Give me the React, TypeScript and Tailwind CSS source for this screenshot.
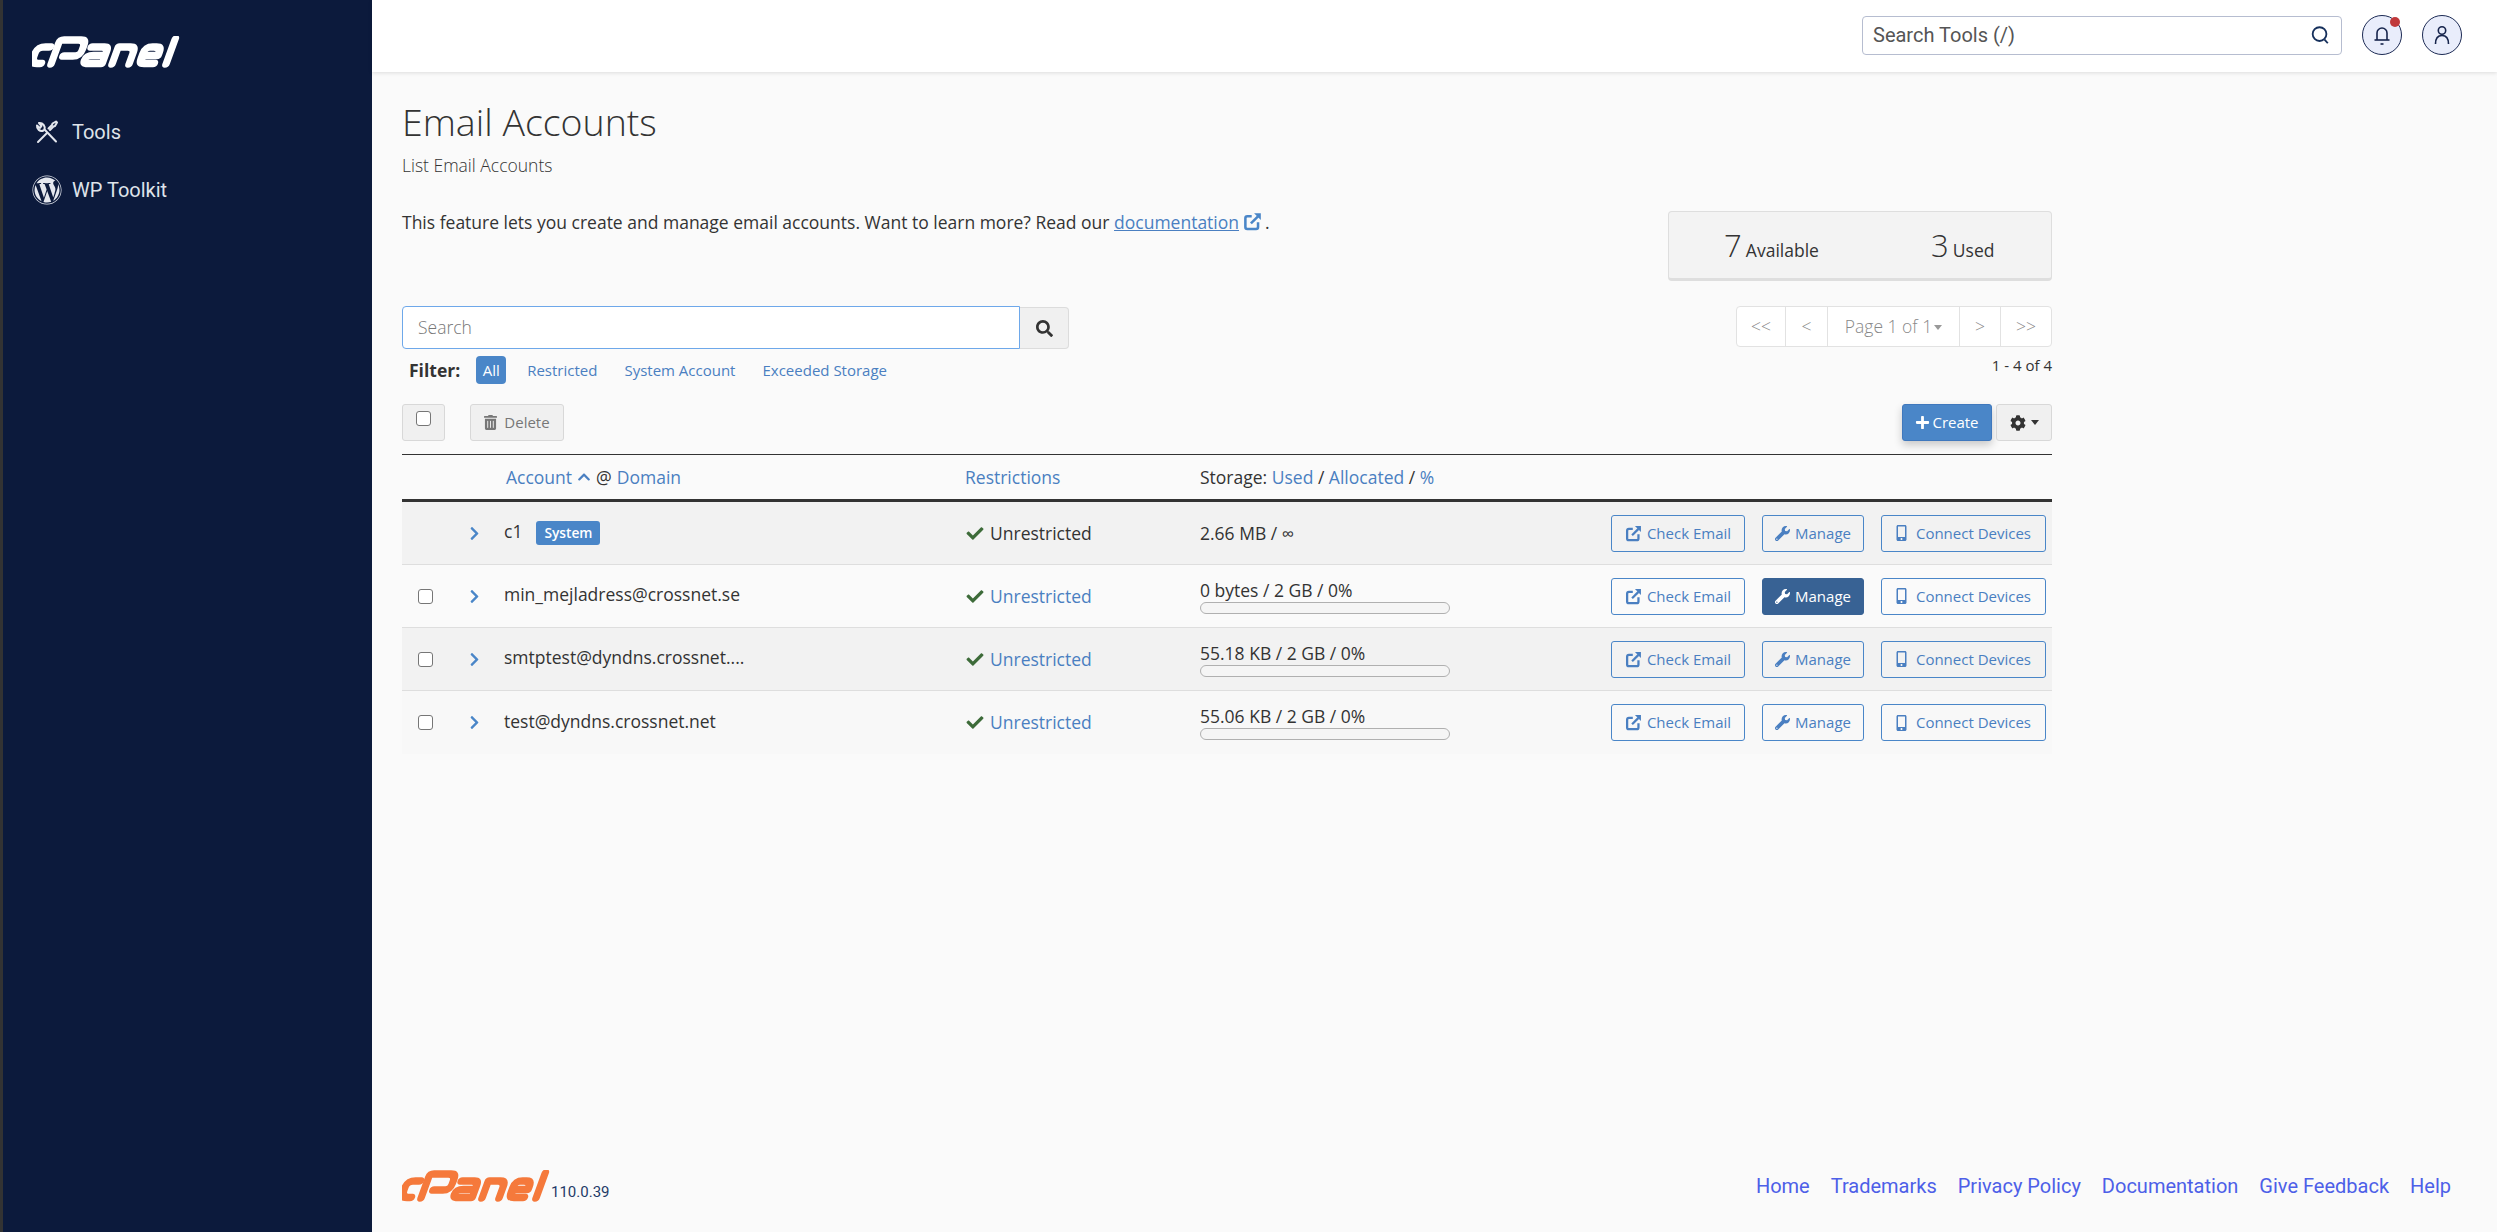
import { FaCheck, FaChevronRight, FaChevronUp, FaCog, FaMobileAlt, FaPlus, FaSearch, FaTrashAlt, FaWordpress, FaWrench } from 'react-icons/fa';

const Logo = ({ color, className }: { color: string; className: string }) => (
    <svg viewBox="0 0 148 32" className={className} aria-label="cPanel" fill="none" stroke={color} strokeWidth="7.500" strokeLinejoin="round" strokeLinecap="round">
        <g transform="translate(-6 0) skewX(-20)" style={{ transformOrigin: '0 31px' }}>
            <path d="M17 11 H11 Q4 11 4 18 V21 Q4 27.500 11 27.500 H14" />
            <path d="M24 28 V6.500 Q24 4 27 4 H44 Q50 4 50 10 V14 Q50 20 44 20 H33" />
            <path d="M58 11 H70 Q75 11 75 16 V27.500 H62 Q56 27.500 56 23.500 Q56 19.500 62 19.500 H73" />
            <path d="M85 28 V11 H96 Q102 11 102 17 V28" />
            <path d="M114 19.500 H128 V17 Q128 11 122 11 H118 Q112 11 112 17 V22 Q112 27.500 118 27.500 H127" />
            <path d="M139 28 V3" />
        </g>
    </svg>
);

const ToolsIcon = () => (
    <svg viewBox="0 0 24 24" className="h-[24px] w-[24px]" fill="none" stroke="#e4e7ee" strokeWidth="2" strokeLinecap="round" strokeLinejoin="round">
        <path d="M3 22 L12 13" />
        <path d="M15 10 L18.500 6.500 L20 6 L22 2.500 L21 1.500 L17.500 3.500 L17 5 L13.500 8.500" />
        <path d="M21 21.500 L9.500 9.500" />
        <path d="M9.500 9.500 C10.500 6.500 8 2.500 4 3 L6.500 6 L5 8 L2 5.500 C1.500 9 5 12 8.500 10.500" />
    </svg>
);

const ExternalLink = ({ className }: { className: string }) => (
    <svg viewBox="0 0 24 24" className={className} fill="none" stroke="currentColor" strokeWidth="3.200">
        <path d="M11 5.500 H5.500 Q3 5.500 3 8 V19 Q3 21.500 5.500 21.500 H16.500 Q19 21.500 19 19 V13" />
        <path d="M10 14.500 L19 5.500" />
        <path d="M14 1.500 H22.500 V10 Z" fill="currentColor" stroke="none" />
    </svg>
);

const Bell = () => (
    <svg viewBox="0 0 24 24" className="h-[24px] w-[24px]" fill="none" stroke="#16244c" strokeWidth="1.600">
        <path d="M7 17 V10 a5 5 0 0 1 10 0 V17" />
        <path d="M4.500 17 H19.500" />
        <path d="M10.500 21 H13.500" />
    </svg>
);

const User = () => (
    <svg viewBox="0 0 24 24" className="h-[24px] w-[24px]" fill="none" stroke="#16244c" strokeWidth="1.600">
        <circle cx="12" cy="7.500" r="3.700" />
        <path d="M5.500 21 C5.500 15 8.500 12.500 12 12.500 C15.500 12.500 18.500 15 18.500 21" />
    </svg>
);

const SearchTools = () => (
    <svg viewBox="0 0 24 24" className="h-[22px] w-[22px]" fill="none" stroke="#16305c" strokeWidth="2">
        <circle cx="11.500" cy="11" r="7.500" />
        <path d="M17 17 L20.500 21" />
    </svg>
);

const Row = ({ name, storage, odd, system, last, hot }: { name: string; storage: string; odd?: boolean; system?: boolean; last?: boolean; hot?: boolean }) => (
    <div className={`grid h-[63px] grid-cols-[102px_461px_235px_1fr] items-center ${odd ? 'bg-[#f2f2f2]' : last ? 'bg-[#f8f8f8]' : 'bg-[#fafafa]'} ${last ? '' : 'border-b-[1.5px] border-[#dedede]'}`}>
        <div className="flex items-center">
            <div className="flex w-[47px] justify-center">
                {!system && <input type="checkbox" className="h-[15px] w-[15px] appearance-none rounded-[3px] border-[1.5px] border-[#767676] bg-white" />}
            </div>
            <FaChevronRight className="ml-[20px] h-[15px] w-[11px] text-[#4a86c8]" />
        </div>
        <div className="flex items-center gap-[14px] pb-[3px] text-[17.5px] text-[#333]">
            {name}
            {system && <span className="mt-[3px] rounded-[3px] bg-[#4a86c8] px-[8px] py-[3px] text-[13.75px] leading-[18px] font-semibold text-white">System</span>}
        </div>
        <div className="flex items-center gap-[6px] pl-[1px] text-[17.5px]">
            <FaCheck className="h-[17px] w-[18px] text-[#3d6b39]" />
            <span className={system ? 'text-[#333]' : 'text-[#4a7fc1]'}>Unrestricted</span>
        </div>
        <div className="flex items-center justify-between pr-[6px]">
            <div className="w-[250px] text-[#333]">
                <div className="text-[17.5px] leading-[23px]">{storage}</div>
                {!system && <div className="h-[12px] rounded-full border-[1.5px] border-[#b0b0b0] bg-[#f5f5f5]" />}
            </div>
            <div className="flex gap-[17px] text-[15px] text-[#4a7fc1]">
                <a className="flex h-[37px] w-[134px] items-center justify-center gap-[5px] rounded-[3px] border-[1.5px] border-[#4a86c8]"><ExternalLink className="h-[17px] w-[17px]" />Check Email</a>
                <a className={`flex h-[37px] w-[102px] items-center justify-center gap-[5px] rounded-[3px] border-[1.5px] ${hot ? 'border-[#386294] bg-[#386294] text-white' : 'border-[#4a86c8]'}`}><FaWrench className="h-[15px] w-[15px]" />Manage</a>
                <a className="flex h-[37px] w-[165px] items-center justify-center gap-[9px] rounded-[3px] border-[1.5px] border-[#4a86c8]"><FaMobileAlt className="h-[16px] w-[11px]" />Connect Devices</a>
            </div>
        </div>
    </div>
);

export default function App() {
    return (
        <div className="flex h-[1232px] w-[2497px] overflow-hidden bg-[#fafafa] font-['Open_Sans',sans-serif]">
            <aside className="w-[372px] shrink-0 border-l-[3px] border-[#333] bg-[#0c1a3c] font-['Roboto',sans-serif] text-[20px] text-[#dfe3ea]">
                <div className="pt-[36px] pl-[29px]">
                    <Logo color="#fff" className="h-[32px] w-[148px]" />
                </div>
                <div className="mt-[49px] flex h-[30px] items-center pl-[32px]">
                    <ToolsIcon />
                    <span className="ml-[13px]">Tools</span>
                </div>
                <div className="mt-[28px] flex h-[30px] items-center pl-[29px]">
                    <FaWordpress className="h-[30px] w-[30px] text-[#e4e7ee]" />
                    <span className="ml-[10px]">WP Toolkit</span>
                </div>
            </aside>
            <div className="flex min-w-0 flex-1 flex-col">
                <header className="flex h-[72px] shrink-0 items-center justify-end gap-[20px] bg-white pr-[35px] pb-[2px] shadow-[0_1px_4px_rgba(0,0,0,0.12)]">
                    <div className="flex h-[39px] w-[480px] items-center justify-between rounded-[4px] border-[1.5px] border-[#b6bdd0] pr-[10px] pl-[10px] font-['Roboto',sans-serif] text-[20px] text-[#555]">
                        Search Tools (/)
                        <SearchTools />
                    </div>
                    <div className="relative flex h-[40px] w-[40px] items-center justify-center rounded-full border-[1.5px] border-[#1c2a54] bg-[#e9edfb]">
                        <Bell />
                        <span className="absolute top-[1px] right-[1px] h-[10px] w-[10px] rounded-full bg-[#c0393b]" />
                    </div>
                    <div className="flex h-[40px] w-[40px] items-center justify-center rounded-full border-[1.5px] border-[#1c2a54] bg-[#e9edfb]">
                        <User />
                    </div>
                </header>
                <main className="w-[1680px] flex-1 pl-[30px]">
                    <h1 className="mt-[28px] text-[37.5px] leading-[44px] font-light text-[#333]">Email Accounts</h1>
                    <div className="mt-[10px] text-[17.5px] leading-[22px] font-light text-[#333]">List Email Accounts</div>
                    <div className="mt-[35px] flex items-start justify-between">
                        <p className="text-[17.5px] leading-[22px] text-[#333]">
                            This feature lets you create and manage email accounts. Want to learn more? Read our{' '}
                            <a className="text-[#4a7fc1] underline">documentation</a>
                            <ExternalLink className="mr-[3px] ml-[4px] inline h-[19px] w-[19px] align-[-2px] text-[#4a86c8]" />.
                        </p>
                        <div className="grid h-[70px] w-[384px] grid-cols-2 items-center rounded-[4px] border-[1.5px] border-b-[3px] border-[#dedede] bg-[#f3f3f3] text-[#333]">
                            <div className="pl-[55px]"><span className="text-[31px] font-light">7</span> <span className="text-[17.5px]">Available</span></div>
                            <div className="pl-[71px]"><span className="text-[31px] font-light">3</span> <span className="text-[17.5px]">Used</span></div>
                        </div>
                    </div>
                    <div className="mt-[25px] flex items-start justify-between">
                        <div>
                            <div className="flex h-[43px] w-[667px]">
                                <div className="flex h-[43px] w-[618px] items-center rounded-l-[4px] border-[1.5px] border-[#6ea8ea] bg-white pl-[15px] text-[17.5px] font-light text-[#777]">Search</div>
                                <div className="mt-[1px] flex h-[42px] w-[49px] items-center justify-center rounded-r-[4px] border-[1.5px] border-l-0 border-[#dcdcdc] bg-[#f0f0f0]">
                                    <FaSearch className="h-[17px] w-[17px] text-[#333]" />
                                </div>
                            </div>
                            <div className="mt-[7px] flex h-[28px] items-center text-[15px] text-[#4a7fc1]">
                                <span className="ml-[7px] text-[17.5px] font-bold text-[#333]">Filter:</span>
                                <span className="ml-[16px] flex h-[28px] w-[30px] items-center justify-center rounded-[4px] bg-[#4a86c8] text-white">All</span>
                                <span className="ml-[21px]">Restricted</span>
                                <span className="ml-[27px]">System Account</span>
                                <span className="ml-[27px]">Exceeded Storage</span>
                            </div>
                        </div>
                        <div className="flex flex-col items-end">
                            <div className="flex h-[41px] w-[316px] rounded-[4px] border-[1.5px] border-[#e2e2e2] bg-white text-[17.5px] font-light text-[#888]">
                                <span className="flex w-[49px] items-center justify-center border-r-[1.5px] border-[#e2e2e2]">&lt;&lt;</span>
                                <span className="flex w-[42px] items-center justify-center border-r-[1.5px] border-[#e2e2e2]">&lt;</span>
                                <span className="flex w-[132px] items-center justify-center gap-[2px] border-r-[1.5px] border-[#e2e2e2]">Page 1 of 1<i className="mt-[2px] border-x-[4.500px] border-t-[5px] border-x-transparent border-t-[#999]" /></span>
                                <span className="flex w-[41px] items-center justify-center border-r-[1.5px] border-[#e2e2e2]">&gt;</span>
                                <span className="flex flex-1 items-center justify-center">&gt;&gt;</span>
                            </div>
                            <div className="mt-[8px] text-[15px] leading-[20px] text-[#333]">1 - 4 of 4</div>
                        </div>
                    </div>
                    <div className="mt-[20px] flex h-[37px] items-center justify-between">
                        <div className="flex gap-[25px]">
                            <div className="flex h-[37px] w-[43px] justify-center rounded-[3px] border-[1.5px] border-[#d8d8d8] bg-[#f0f0f0] pt-[6px]">
                                <input type="checkbox" className="h-[15px] w-[15px] appearance-none rounded-[3px] border-[1.5px] border-[#767676] bg-white" />
                            </div>
                            <div className="flex h-[37px] w-[94px] items-center justify-center gap-[7px] rounded-[3px] border-[1.5px] border-[#d8d8d8] bg-[#f0f0f0] text-[15px] text-[#777]">
                                <FaTrashAlt className="h-[15px] w-[13px]" />Delete
                            </div>
                        </div>
                        <div className="flex gap-[4px]">
                            <div className="flex h-[37px] w-[90px] items-center justify-center gap-[2px] rounded-[3px] border-[1.5px] border-[#3f78bd] bg-[#4a86c8] text-[15px] text-white shadow-[0_4px_8px_rgba(0,0,0,0.2)]">
                                <FaPlus className="h-[15px] w-[15px]" />Create
                            </div>
                            <div className="flex h-[37px] w-[56px] items-center justify-center gap-[5px] rounded-[3px] border-[1.5px] border-[#d8d8d8] bg-[#f0f0f0] text-[#333]">
                                <FaCog className="h-[16px] w-[16px]" /><i className="border-x-[4.500px] border-t-[5px] border-x-transparent border-t-[#333]" />
                            </div>
                        </div>
                    </div>
                    <div className="mt-[13px] border-t-[1.5px] border-[#333]">
                        <div className="grid h-[47px] grid-cols-[102px_461px_235px_1fr] items-center border-b-[3px] border-[#333] text-[17.5px] text-[#4a7fc1]">
                            <div />
                            <div className="flex items-center pl-[2px]">
                                Account
                                <FaChevronUp className="mx-[4px] h-[14px] w-[16px]" />
                                <span className="mr-[5px] text-[#333]">@</span>
                                Domain
                            </div>
                            <div>Restrictions</div>
                            <div><span className="text-[#333]">Storage:</span> Used <span className="text-[#333]">/</span> Allocated <span className="text-[#333]">/</span> %</div>
                        </div>
                        <Row name="c1" storage="2.66 MB / ∞" odd system />
                        <Row name="min_mejladress@crossnet.se" storage="0 bytes / 2 GB / 0%" hot />
                        <Row name="smtptest@dyndns.crossnet...." storage="55.18 KB / 2 GB / 0%" odd />
                        <Row name="test@dyndns.crossnet.net" storage="55.06 KB / 2 GB / 0%" last />
                    </div>
                </main>
                <footer className="flex h-[82px] shrink-0 items-center justify-between pr-[46px] pb-[10px] pl-[30px] font-['Roboto',sans-serif]">
                    <div className="flex items-end">
                        <Logo color="#f5793b" className="h-[32px] w-[148px]" />
                        <span className="ml-[1px] text-[15px] leading-[20px] text-[#1f3a68]">110.0.39</span>
                    </div>
                    <nav className="flex gap-[21px] text-[20px] text-[#4d5fe8]">
                        <a>Home</a>
                        <a>Trademarks</a>
                        <a>Privacy Policy</a>
                        <a>Documentation</a>
                        <a>Give Feedback</a>
                        <a>Help</a>
                    </nav>
                </footer>
            </div>
        </div>
    );
}
